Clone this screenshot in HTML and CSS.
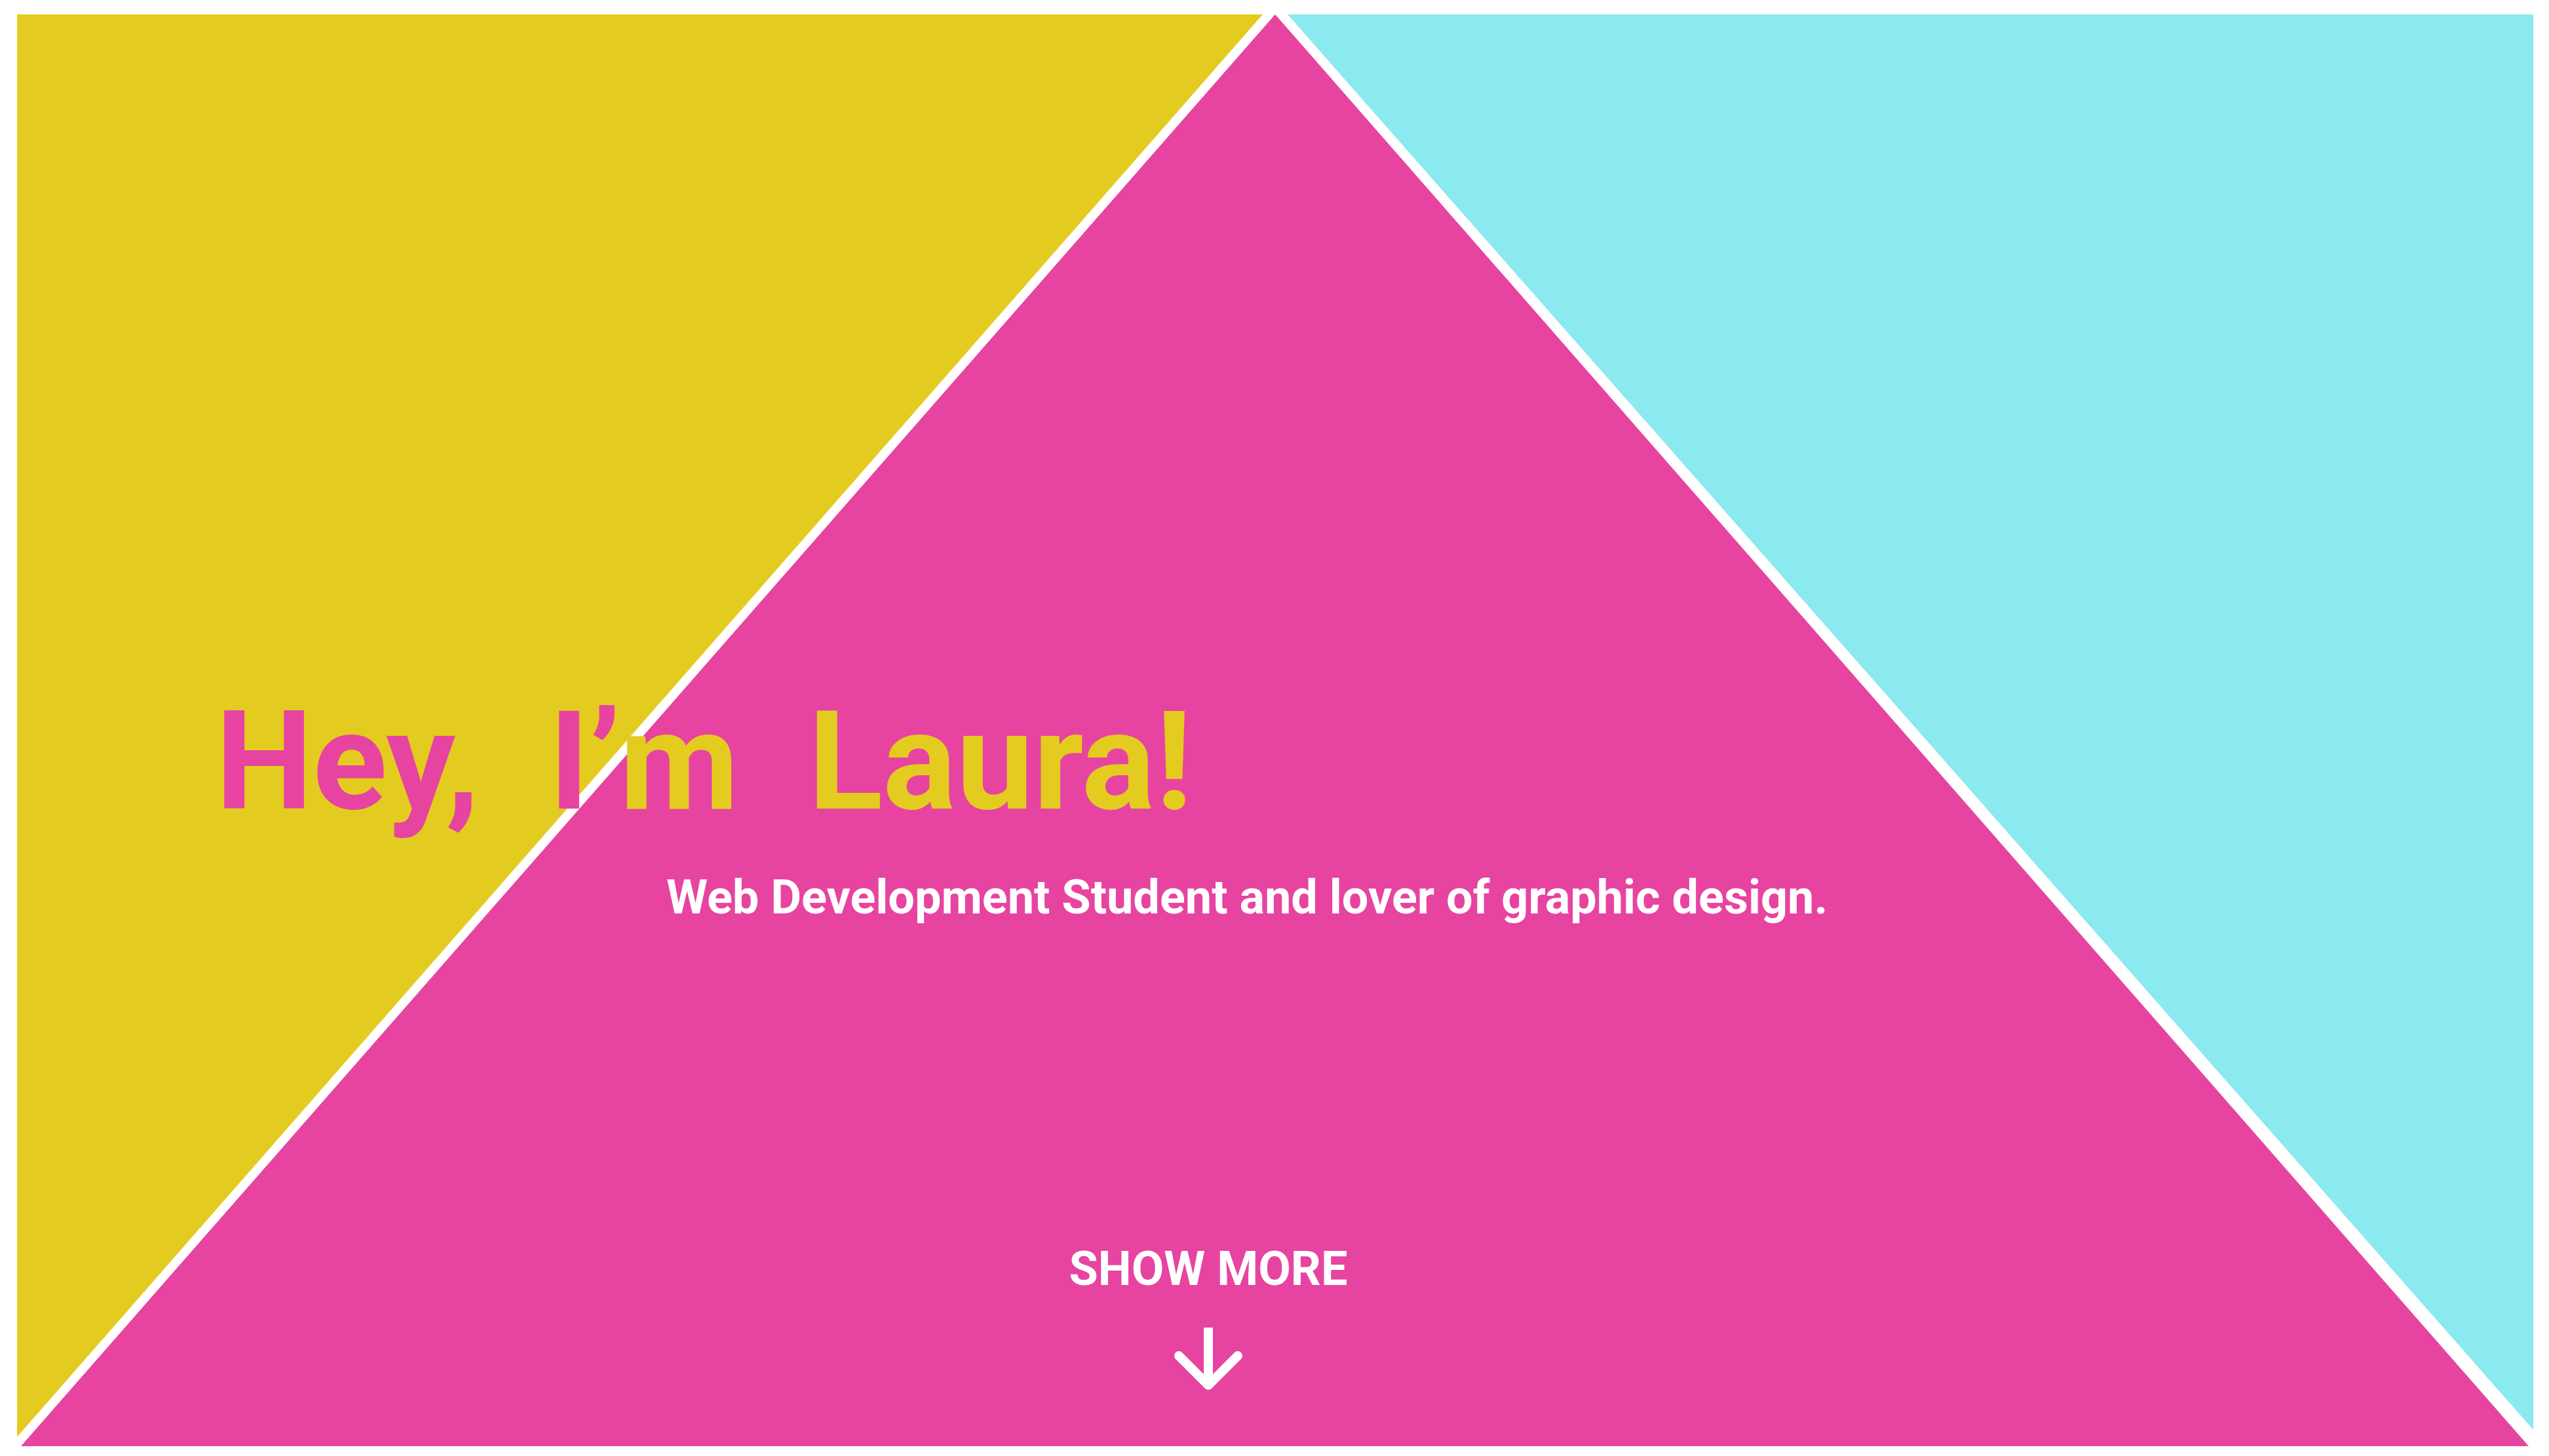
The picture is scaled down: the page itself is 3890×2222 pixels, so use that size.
FILE: index.html
```html
<!DOCTYPE html>
<html lang="en">
<head>
<meta charset="utf-8">
<title>Laura</title>
<link rel="stylesheet" href="styles.css">
</head>
<body>
<section class="hero">
  <svg class="hero-bg" viewBox="0 0 3840 2185" preserveAspectRatio="none" aria-hidden="true">
    <polygon class="tri-yellow" points="0,0 1901,0 0,2171"/>
    <polygon class="tri-cyan" points="1939,0 3840,0 3840,2160"/>
    <polygon class="tri-pink" points="1920,0 6,2185 3833,2185"/>
  </svg>
  <div class="hero-content">
    <h1 class="headline"><span class="on-yellow">Hey, I’</span><span class="on-pink">m Laura!</span></h1>
    <p class="subtitle">Web Development Student and lover of graphic design.</p>
    <a class="cta" href="#more">
      <span class="cta-label">SHOW MORE</span>
      <svg class="cta-arrow" viewBox="0 0 104 96" aria-hidden="true">
        <rect x="45" y="0" width="14" height="86" fill="#fff"/>
        <polyline points="7,43 52,88 97,43" fill="none" stroke="#fff" stroke-width="14" stroke-linecap="round" stroke-linejoin="round"/>
      </svg>
    </a>
  </div>
</section>
</body>
</html>
```
FILE: styles.css
```css
html, body {
  margin: 0;
  padding: 0;
  background: #ffffff;
}

body {
  font-family: Roboto, "Liberation Sans", sans-serif;
}

.hero {
  position: relative;
  margin: 22px 24px 15px 26px;
  height: 2185px;
}

.hero-bg {
  position: absolute;
  inset: 0;
  width: 100%;
  height: 100%;
  display: block;
}

.tri-yellow { fill: #e4cb20; }
.tri-cyan { fill: #8be9f0; }
.tri-pink { fill: #e644a0; }

.hero-content {
  position: relative;
  display: flex;
  flex-direction: column;
  align-items: flex-start;
  padding-top: 1035px;
}

.headline {
  margin: 0 0 0 303px;
  font-size: 210px;
  line-height: 1;
  font-weight: 700;
  word-spacing: 54px;
  white-space: nowrap;
}

.on-yellow { color: #e644a0; }
.on-pink { color: #e4cb20; }

.subtitle {
  margin: 67px 0 0 991px;
  font-size: 72px;
  line-height: 1;
  font-weight: 700;
  color: #ffffff;
  white-space: nowrap;
}

.cta {
  margin: 495px 0 0 1518px;
  width: 600px;
  display: flex;
  flex-direction: column;
  align-items: center;
  text-decoration: none;
  color: #ffffff;
}

.cta-label {
  font-size: 72px;
  line-height: 1;
  font-weight: 700;
  white-space: nowrap;
}

.cta-arrow {
  margin-top: 53px;
  width: 104px;
  height: 96px;
  display: block;
}
```
